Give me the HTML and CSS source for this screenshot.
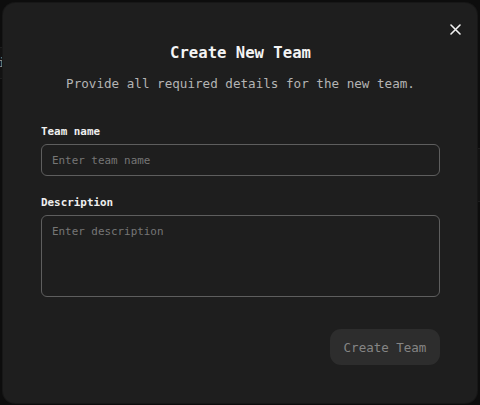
FILE: index.html
```html
<!DOCTYPE html>
<html lang="en">
<head>
<meta charset="utf-8">
<title>Create New Team</title>
<link rel="stylesheet" href="styles.css">
</head>
<body>
<div class="backdrop">
  <div class="bg-col bg-left">
    <div class="bg-row"><span class="bg-text">i</span></div>
  </div>
  <div class="bg-col bg-right">
    <div class="bg-row bg-row-tall"></div>
  </div>
</div>

<div class="dialog" role="dialog" aria-labelledby="dlg-title">
  <button class="close" aria-label="Close">
    <svg width="11" height="11" viewBox="0 0 11 11"><path d="M1 1L10 10M10 1L1 10" stroke="#f2f2f2" stroke-width="1.6" stroke-linecap="round" fill="none"/></svg>
  </button>
  <h2 class="title" id="dlg-title">Create New Team</h2>
  <p class="subtitle">Provide all required details for the new team.</p>

  <label class="label label-first" for="team-name">Team name</label>
  <input class="field input" id="team-name" type="text" placeholder="Enter team name">

  <label class="label label-second" for="team-desc">Description</label>
  <textarea class="field textarea" id="team-desc" placeholder="Enter description"></textarea>

  <div class="actions">
    <button class="submit" disabled>Create Team</button>
  </div>
</div>
</body>
</html>
```

FILE: styles.css
```css
* { box-sizing: border-box; }

html, body {
  margin: 0;
  padding: 0;
  width: 480px;
  height: 405px;
  overflow: hidden;
  background: #0d0d0d;
  font-family: "DejaVu Sans Mono", "Liberation Mono", monospace;
}

.backdrop {
  display: grid;
  grid-template-columns: 1fr 1fr;
  height: 405px;
}

.bg-left { padding-top: 47px; }
.bg-right { padding-top: 148px; }

.bg-row {
  height: 32px;
  border-top: 1px solid #1d1d1d;
  border-bottom: 1px solid #1d1d1d;
  background: #121212;
  display: flex;
  align-items: center;
}

.bg-row-tall { height: 54px; }

.bg-text {
  color: #8a8a8a;
  font-size: 12px;
  margin-left: -2px;
}

.dialog {
  position: absolute;
  top: 3px;
  left: 3px;
  width: 474px;
  height: 400px;
  background: #1e1e1e;
  border-radius: 12px;
  padding: 40px 37px 38px 38px;
  display: flex;
  flex-direction: column;
  box-shadow: 0 0 0 1px #171717;
}

.close {
  position: absolute;
  top: 16.5px;
  right: 12px;
  width: 19px;
  height: 19px;
  padding: 0;
  border: 0;
  background: transparent;
  display: flex;
  align-items: center;
  justify-content: center;
}

.title {
  margin: 0;
  text-align: center;
  color: #f4f4f4;
  font-size: 15.6px;
  line-height: 20px;
  font-weight: bold;
}

.subtitle {
  margin: 11.5px 0 0;
  text-align: center;
  color: #b4b4b4;
  font-size: 12.6px;
  line-height: 18px;
}

.label {
  display: block;
  color: #efefef;
  font-size: 10.9px;
  line-height: 16px;
  font-weight: bold;
}

.label-first { margin-top: 31px; }
.label-second { margin-top: 18.5px; }

.field {
  display: block;
  width: 100%;
  margin: 4.5px 0 0;
  background: transparent;
  border: 1px solid #5e5e5e;
  border-radius: 6px;
  color: #eee;
  font-family: "DejaVu Sans Mono", "Liberation Mono", monospace;
  font-size: 10.9px;
  padding: 0 10px;
  outline: none;
}

.field::placeholder { color: #767676; }

.input { height: 32px; }

.textarea {
  height: 81.5px;
  padding: 7.5px 10px;
  line-height: 16px;
  resize: none;
}

.actions {
  display: flex;
  justify-content: flex-end;
  margin-top: 32.5px;
}

.submit {
  width: 110px;
  height: 36px;
  border: 0;
  border-radius: 11px;
  background: #2d2d2d;
  color: #858585;
  font-family: "DejaVu Sans Mono", "Liberation Mono", monospace;
  font-size: 12.5px;
  padding: 0;
}
```
